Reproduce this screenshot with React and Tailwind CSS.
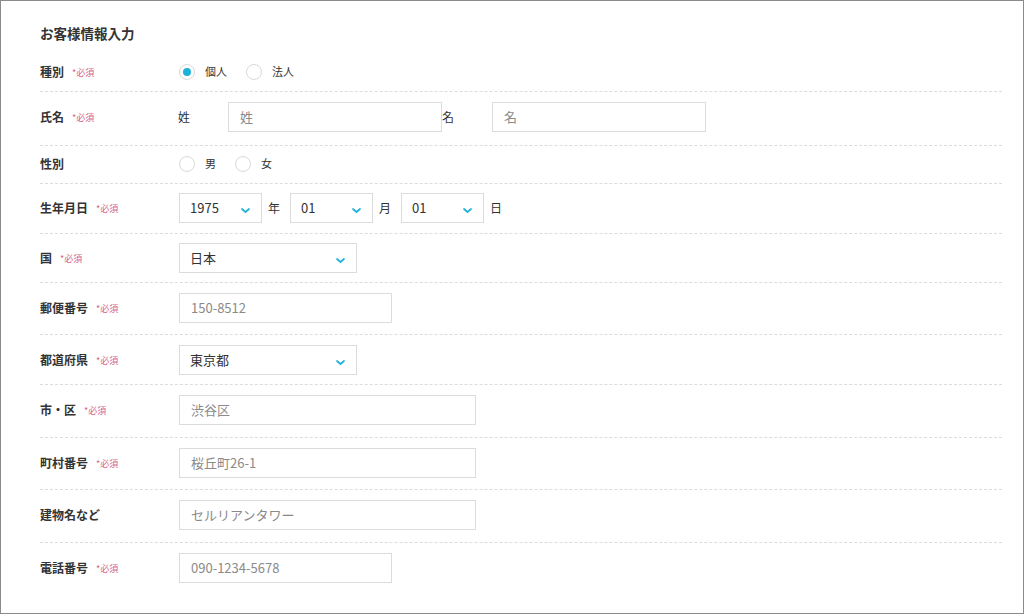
import React from 'react';

const font = { fontFamily: '"Noto Sans CJK JP", "Noto Sans", sans-serif' };

// 必須マーク
const Req = () => <span className="ml-[8px] mt-[2px] text-[9px] font-normal text-[#d4658a]">*必須</span>;

const Chevron = () => (
  <svg width="9" height="5" viewBox="0 0 9 5" className="absolute right-[11px] top-[14px]">
    <path d="M1 1 L4.5 4 L8 1" fill="none" stroke="#1db2d6" strokeWidth="1.7" strokeLinecap="round" strokeLinejoin="round" />
  </svg>
);

const Select = ({ value, w }) => (
  <div className={`relative h-[30px] border border-[#dcdcdc] bg-white flex items-center pl-[10px] text-[13px] text-[#333] ${w}`}>
    {value}
    <Chevron />
  </div>
);

const Input = ({ value, w }) => (
  <div className={`h-[30px] border border-[#dcdcdc] bg-white flex items-center pl-[11px] text-[13px] text-[#8a8a8a] ${w}`}>
    {value}
  </div>
);

const Radio = ({ label, checked }) => (
  <div className="flex items-center mr-[19px]">
    <span className="w-[16px] h-[16px] rounded-full border border-[#d9d9d9] flex items-center justify-center">
      {checked && <span className="w-[8px] h-[8px] rounded-full bg-[#1db2d6]" />}
    </span>
    <span className="ml-[10px] text-[11px] text-[#333]">{label}</span>
  </div>
);

const Row = ({ label, req, children, last, pad }) => (
  <div className={`flex items-center ${pad || 'h-[38px] pb-[2px]'} ${last ? '' : 'border-b border-dashed border-[#dcdcdc]'}`}>
    <div className="w-[139px] flex items-center text-[12px] font-bold text-[#333]">
      {label}
      {req && <Req />}
    </div>
    <div className="flex items-center">{children}</div>
  </div>
);

const App = () => {
  return (
    <div className="w-[1024px] h-[614px] border border-[#8a8a8a] bg-white pl-[39px] pr-[21px] pt-[22px]" style={font}>
      <h1 className="text-[13.5px] font-bold text-[#333] leading-[20px] mb-[11px]">お客様情報入力</h1>

      <Row label="種別" req>
        <Radio label="個人" checked />
        <Radio label="法人" />
      </Row>

      <Row label="氏名" req pad="pt-[10px] pb-[13px]">
        <span className="w-[50px] -ml-[1px] text-[12px] text-[#333]">姓</span>
        <Input value="姓" w="w-[214px]" />
        <span className="w-[50px] text-[12px] text-[#333]">名</span>
        <Input value="名" w="w-[214px]" />
      </Row>

      <Row label="性別">
        <Radio label="男" />
        <Radio label="女" />
      </Row>

      <Row label="生年月日" req pad="pt-[9px] pb-[10px]">
        <Select value="1975" w="w-[83px]" />
        <span className="w-[28px] pl-[6px] text-[12px] text-[#333]">年</span>
        <Select value="01" w="w-[83px]" />
        <span className="w-[28px] pl-[6px] text-[12px] text-[#333]">月</span>
        <Select value="01" w="w-[83px]" />
        <span className="pl-[6px] text-[12px] text-[#333]">日</span>
      </Row>

      <Row label="国" req pad="pt-[9px] pb-[9px]">
        <Select value="日本" w="w-[178px]" />
      </Row>

      <Row label="郵便番号" req pad="pt-[10px] pb-[11px]">
        <Input value="150-8512" w="w-[213px]" />
      </Row>

      <Row label="都道府県" req pad="pt-[10px] pb-[9px]">
        <Select value="東京都" w="w-[178px]" />
      </Row>

      <Row label="市・区" req pad="pt-[10px] pb-[12px]">
        <Input value="渋谷区" w="w-[297px]" />
      </Row>

      <Row label="町村番号" req pad="pt-[10px] pb-[11px]">
        <Input value="桜丘町26-1" w="w-[297px]" />
      </Row>

      <Row label="建物名など" pad="pt-[10px] pb-[12px]">
        <Input value="セルリアンタワー" w="w-[297px]" />
      </Row>

      <Row label="電話番号" req last pad="pt-[10px] pb-[10px]">
        <Input value="090-1234-5678" w="w-[213px]" />
      </Row>
    </div>
  );
};

export default App;
